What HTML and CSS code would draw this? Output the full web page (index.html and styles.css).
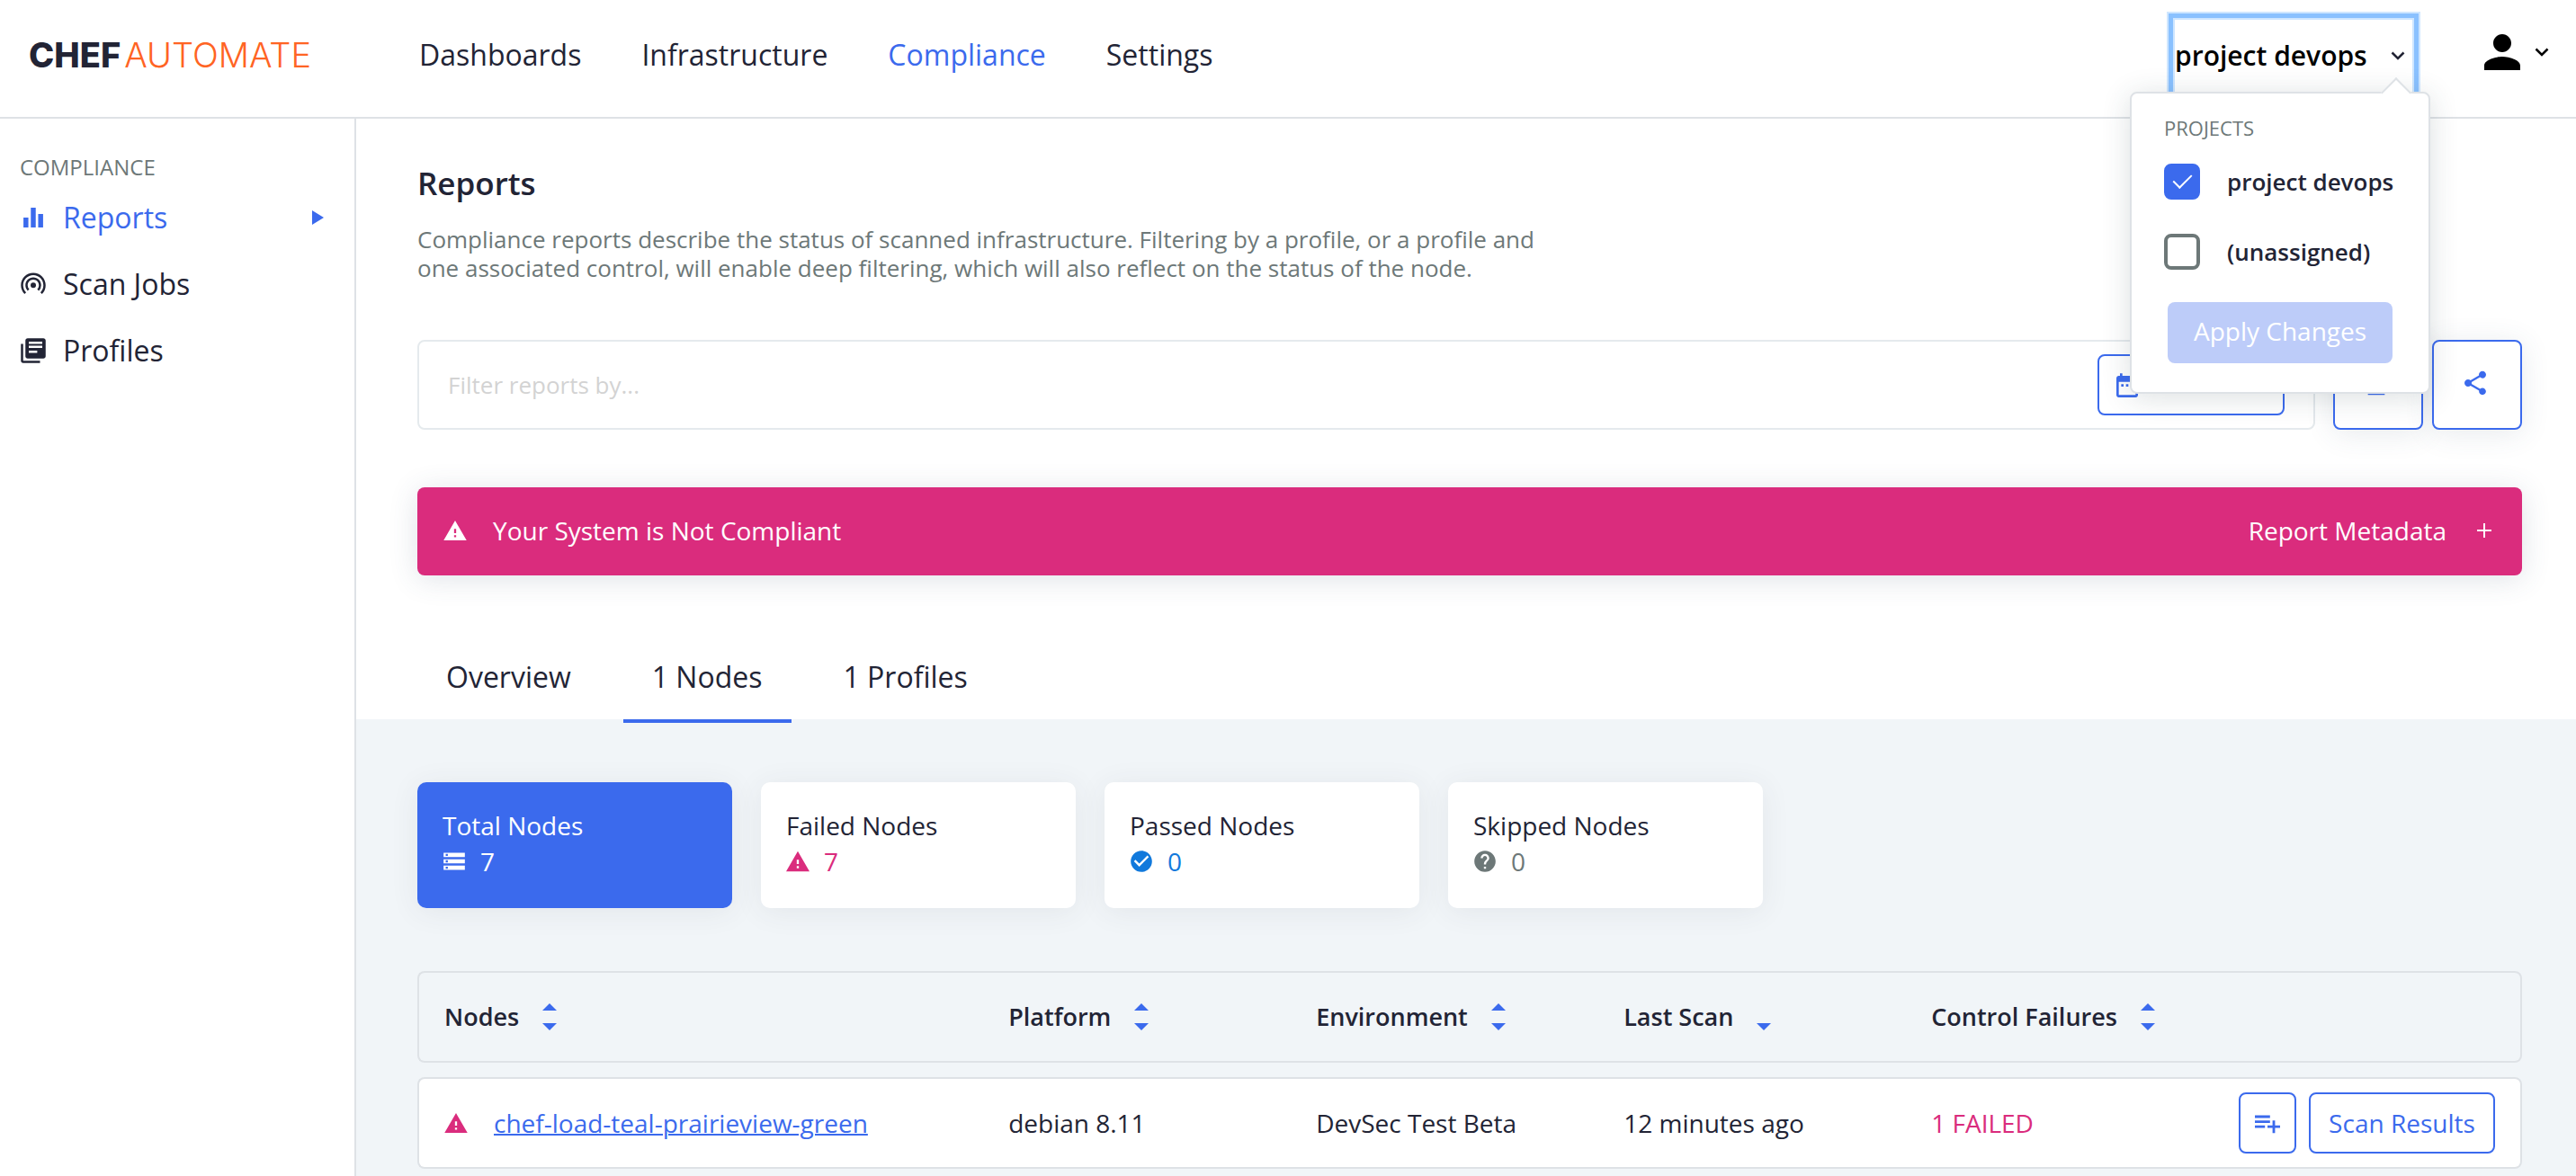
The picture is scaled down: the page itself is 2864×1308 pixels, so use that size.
FILE: index.html
```html
<!DOCTYPE html>
<html lang="en">
<head>
<meta charset="utf-8">
<title>Chef Automate - Compliance Reports</title>
<link rel="stylesheet" href="styles.css">
</head>
<body>
<svg class="sprite" aria-hidden="true">
  <symbol id="warning" viewBox="1 2 22 19"><path d="M1 21h22L12 2 1 21zm12-3h-2v-2h2v2zm0-4h-2v-4h2v4z"/></symbol>
  <symbol id="chevron" viewBox="0 0 16 10"><path d="M1.500 1.500L8 8l6.500-6.500" fill="none" stroke="currentColor" stroke-width="2.500"/></symbol>
  <symbol id="sort" viewBox="0 0 16 30"><path d="M8 0l8 8H0zM0 22h16l-8 8z"/></symbol>
  <symbol id="sort-down" viewBox="0 0 16 30"><path d="M0 22h16l-8 8z"/></symbol>
</svg>

<header class="topbar">
  <a class="logo" href="#"><span class="logo-chef">CHEF</span><span class="logo-automate">AUTOMATE</span></a>
  <nav class="topnav">
    <a href="#">Dashboards</a>
    <a href="#">Infrastructure</a>
    <a href="#" class="active">Compliance</a>
    <a href="#">Settings</a>
  </nav>
  <div class="projects">
    <button class="projects-toggle" type="button" aria-expanded="true">project devops <svg class="chevron"><use href="#chevron"/></svg></button>
    <form class="projects-menu">
      <h2 class="menu-title">PROJECTS</h2>
      <label class="check"><input type="checkbox" checked><span>project devops</span></label>
      <label class="check"><input type="checkbox"><span>(unassigned)</span></label>
      <button class="apply" type="button" disabled>Apply Changes</button>
    </form>
  </div>
  <button class="user" type="button" aria-label="User menu">
    <svg class="person" viewBox="4 4 16 16"><path d="M12 12c2.210 0 4-1.790 4-4s-1.790-4-4-4-4 1.790-4 4 1.790 4 4 4zm0 2c-2.670 0-8 1.340-8 4v2h16v-2c0-2.660-5.330-4-8-4z"/></svg>
    <svg class="chevron"><use href="#chevron"/></svg>
  </button>
</header>

<div class="shell">
  <aside class="sidebar">
    <h2 class="side-title">COMPLIANCE</h2>
    <nav class="sidenav">
      <a href="#" class="active">
        <svg viewBox="1 1 22 22"><path d="M10 20h4V4h-4v16zm-6 0h4v-8H4v8zM16 9v11h4V9h-4z"/></svg>
        <span>Reports</span>
        <svg class="caret" viewBox="0 0 13 16"><path d="M0 0l13 8-13 8z"/></svg>
      </a>
      <a href="#">
        <svg viewBox="0 0 24 24"><path d="M12 5.990c-3.860 0-7 3.140-7 7 0 1.920.78 3.650 2.030 4.920l1.420-1.420A4.980 4.980 0 0 1 7 12.990c0-2.760 2.240-5 5-5s5 2.240 5 5c0 1.370-.56 2.620-1.460 3.520l1.420 1.420A6.980 6.980 0 0 0 19 12.990c0-3.860-3.140-7-7-7z"/><circle cx="12" cy="13" r="2.400"/><path d="M12 1.990C5.930 1.990 1 6.920 1 12.990c0 3.040 1.230 5.790 3.220 7.780l1.420-1.420A8.960 8.960 0 0 1 3 12.990c0-4.970 4.030-9 9-9s9 4.030 9 9c0 2.490-1.010 4.740-2.640 6.360l1.420 1.420A10.960 10.960 0 0 0 23 12.990c0-6.070-4.930-11-11-11z"/></svg>
        <span>Scan Jobs</span>
      </a>
      <a href="#">
        <svg viewBox="0 0 24 24"><path d="M3 6H1v15c0 1.100.9 2 2 2h15v-2H3V6zM21 1H7c-1.100 0-2 .9-2 2v14c0 1.100.9 2 2 2h14c1.100 0 2-.9 2-2V3c0-1.100-.9-2-2-2zm-1 8.500H8v-2h12v2zm-4.500 4.500H8v-2h7.500v2zM20 6H8V4h12v2z"/></svg>
        <span>Profiles</span>
      </a>
    </nav>
  </aside>

  <main class="main">
    <section class="intro">
      <h1>Reports</h1>
      <p>Compliance reports describe the status of scanned infrastructure. Filtering by a profile, or a profile and one associated control, will enable deep filtering, which will also reflect on the status of the node.</p>
    </section>

    <div class="filters">
      <div class="filter-box">
        <input type="text" placeholder="Filter reports by..." aria-label="Filter reports by">
        <button class="outline date" type="button" aria-label="Choose date">
          <svg viewBox="3 1 18 21"><path d="M9 11H7v2h2v-2zm4 0h-2v2h2v-2zm4 0h-2v2h2v-2zm2-7h-1V2h-2v2H8V2H6v2H5c-1.110 0-2 .9-2 2v14c0 1.100.89 2 2 2h14c1.100 0 2-.9 2-2V6c0-1.100-.9-2-2-2zm0 16H5V9h14v11z"/></svg>
        </button>
      </div>
      <div class="filter-actions">
        <button class="outline square" type="button" aria-label="Download"><svg viewBox="0 0 24 24"><path d="M19 10h-4V4H9v6H5l7 7 7-7zM5 19v3h14v-3H5z"/></svg></button>
        <button class="outline square" type="button" aria-label="Share"><svg viewBox="0 0 24 24"><path d="M18 16.080c-.76 0-1.440.3-1.960.77L8.910 12.700c.05-.23.090-.46.090-.7s-.04-.47-.09-.7l7.050-4.110c.54.5 1.250.81 2.040.81 1.660 0 3-1.340 3-3s-1.340-3-3-3-3 1.340-3 3c0 .24.040.47.090.7L8.040 9.810C7.500 9.310 6.790 9 6 9c-1.660 0-3 1.340-3 3s1.340 3 3 3c.79 0 1.500-.31 2.040-.81l7.120 4.160c-.05.210-.08.430-.08.650 0 1.610 1.310 2.920 2.920 2.920 1.610 0 2.920-1.310 2.920-2.920s-1.310-2.920-2.920-2.920z"/></svg></button>
      </div>
    </div>

    <div class="banner">
      <svg class="warn"><use href="#warning"/></svg>
      <span class="banner-text">Your System is Not Compliant</span>
      <button class="metadata" type="button">Report Metadata <svg viewBox="0 0 16 16"><path d="M7 0h2v7h7v2H9v7H7V9H0V7h7z"/></svg></button>
    </div>

    <nav class="tabs">
      <a href="#">Overview</a>
      <a href="#" class="active">1 Nodes</a>
      <a href="#">1 Profiles</a>
    </nav>

    <section class="results">
      <div class="cards">
        <button class="card selected" type="button">
          <span>Total Nodes</span>
          <span class="count"><svg viewBox="1 1 22 22"><path d="M2 20h20v-4H2v4zm2-3h2v2H4v-2zM2 4v4h20V4H2zm4 3H4V5h2v2zm-4 7h20v-4H2v4zm2-3h2v2H4v-2z"/></svg>7</span>
        </button>
        <button class="card" type="button">
          <span>Failed Nodes</span>
          <span class="count failed"><svg><use href="#warning"/></svg>7</span>
        </button>
        <button class="card" type="button">
          <span>Passed Nodes</span>
          <span class="count passed"><svg viewBox="1 1 22 22"><path d="M12 2C6.480 2 2 6.480 2 12s4.480 10 10 10 10-4.480 10-10S17.520 2 12 2zm-2 15l-5-5 1.410-1.410L10 14.170l7.590-7.590L19 8l-9 9z"/></svg>0</span>
        </button>
        <button class="card" type="button">
          <span>Skipped Nodes</span>
          <span class="count skipped"><svg viewBox="1 1 22 22"><path d="M12 2C6.480 2 2 6.480 2 12s4.480 10 10 10 10-4.480 10-10S17.520 2 12 2zm1 17h-2v-2h2v2zm2.070-7.750l-.9.920C13.450 12.900 13 13.500 13 15h-2v-.5c0-1.100.45-2.100 1.170-2.830l1.240-1.260c.37-.36.59-.86.59-1.410 0-1.100-.9-2-2-2s-2 .9-2 2H8c0-2.210 1.790-4 4-4s4 1.790 4 4c0 .88-.36 1.680-.93 2.250z"/></svg>0</span>
        </button>
      </div>

      <table class="nodes">
        <colgroup><col class="c-node"><col class="c-mid"><col class="c-mid"><col class="c-mid"><col class="c-mid"><col></colgroup>
        <thead>
          <tr>
            <th><button type="button">Nodes <svg><use href="#sort"/></svg></button></th>
            <th><button type="button">Platform <svg><use href="#sort"/></svg></button></th>
            <th><button type="button">Environment <svg><use href="#sort"/></svg></button></th>
            <th><button type="button">Last Scan <svg><use href="#sort-down"/></svg></button></th>
            <th><button type="button">Control Failures <svg><use href="#sort"/></svg></button></th>
            <td></td>
          </tr>
        </thead>
        <tbody>
          <tr>
            <td><div class="node"><svg class="warn"><use href="#warning"/></svg><a href="#">chef-load-teal-prairieview-green</a></div></td>
            <td>debian 8.11</td>
            <td>DevSec Test Beta</td>
            <td>12 minutes ago</td>
            <td class="failed">1 FAILED</td>
            <td><div class="actions">
              <button class="outline history" type="button" aria-label="Scan history"><svg viewBox="2 5 20 14"><path d="M14 10H2v2h12v-2zm0-4H2v2h12V6zm4 8v-4h-2v4h-4v2h4v4h2v-4h4v-2h-4zM2 16h8v-2H2v2z"/></svg></button>
              <button class="outline scan" type="button">Scan Results</button>
            </div></td>
          </tr>
        </tbody>
      </table>
    </section>
  </main>
</div>
</body>
</html>
```
FILE: styles.css
```css
:root {
  --blue: #3b6aed;
  --pink: #da2c7d;
  --ink: #222435;
  --gray: #6d7878;
  --line: #dee2e6;
  --wash: #f1f5f8;
}

* { box-sizing: border-box; }

body {
  margin: 0;
  min-height: 100vh;
  display: flex;
  flex-direction: column;
  font: 28px/40px "Open Sans", "Noto Sans", sans-serif;
  color: var(--ink);
  background: #fff;
}

h1, h2, p { margin: 0; font-weight: 400; }
a { color: inherit; text-decoration: none; }
button { font: inherit; color: inherit; background: none; border: 0; padding: 0; cursor: pointer; }
svg { display: block; flex: none; fill: currentColor; }
.sprite { position: absolute; width: 0; height: 0; }
.chevron { width: 16px; height: 10px; }

/* Top bar */
.topbar {
  display: flex;
  align-items: flex-start;
  height: 132px;
  padding: 0 30px 0 32px;
  border-bottom: 2px solid var(--line);
}
.logo {
  display: flex;
  gap: 4px;
  width: 434px;
  padding-top: 41px;
  font: 38px/40px Inter, sans-serif;
}
.logo-chef { font-weight: 800; }
.logo-automate { font-weight: 300; color: #ff6424; }
.topnav { display: flex; gap: 67px; padding-top: 41px; font-size: 32px; }
.active { color: var(--blue); }

.projects { position: relative; margin: 22px 80px 0 auto; }
.projects-toggle {
  display: flex;
  align-items: center;
  justify-content: space-between;
  width: 264px;
  height: 80px;
  padding-right: 8px;
  font-size: 30px;
  font-weight: 600;
  white-space: nowrap;
  color: #000;
  box-shadow: 0 0 0 2px #cfe6ff, 0 0 0 7px #8ac1ff, 0 0 0 9px #cfe6ff;
}
.projects-toggle .chevron { color: var(--ink); }
.projects-menu {
  position: absolute;
  z-index: 2;
  top: 80px;
  right: -20px;
  width: 334px;
  height: 336px;
  padding: 20px 36px;
  background: #fff;
  border: 2px solid var(--line);
  border-radius: 8px;
  box-shadow: 0 4px 32px rgba(40, 60, 70, .16);
}
.projects-menu::before {
  content: "";
  position: absolute;
  top: -13px;
  right: 24px;
  width: 22px;
  height: 22px;
  background: #fff;
  border: solid var(--line);
  border-width: 2px 0 0 2px;
  transform: rotate(45deg);
}
.menu-title { font-size: 22px; line-height: 36px; color: var(--gray); }
.check {
  display: flex;
  align-items: center;
  gap: 30px;
  height: 78px;
  font-size: 26px;
  font-weight: 600;
  white-space: nowrap;
}
.check:first-of-type { margin-top: 3px; }
.check input {
  appearance: none;
  flex: none;
  width: 40px;
  height: 40px;
  margin: 0;
  border: 4px solid var(--gray);
  border-radius: 8px;
  display: grid;
  place-items: center;
}
.check input:checked { border-color: var(--blue); background: var(--blue); }
.check input:checked::before {
  content: "";
  width: 9px;
  height: 18px;
  margin-bottom: 6px;
  border: solid #fff;
  border-width: 0 2px 2px 0;
  transform: rotate(45deg);
}
.apply {
  display: block;
  width: 250px;
  height: 68px;
  margin: 17px 4px 0;
  padding-bottom: 4px;
  border-radius: 8px;
  background: #bdccf9;
  color: #fff;
}

.user { display: flex; align-items: center; gap: 16px; padding-top: 38px; color: #000; }
.person { width: 40px; height: 40px; }

/* Side bar */
.shell { display: flex; flex: 1; }
.sidebar {
  flex: none;
  width: 396px;
  padding: 36px 34px 0 22px;
  border-right: 2px solid var(--line);
}
.side-title { font-size: 24px; line-height: 36px; color: var(--gray); }
.sidenav { display: flex; flex-direction: column; margin-top: 1px; font-size: 32px; }
.sidenav a { display: flex; align-items: center; gap: 18px; height: 74px; }
.sidenav svg { width: 30px; height: 30px; }
.sidenav .caret { width: 13px; height: 16px; margin-left: auto; }

/* Main column */
.main { flex: 1; min-width: 0; display: flex; flex-direction: column; }
.intro { padding: 48px 60px 0 68px; }
h1 { font-size: 35px; line-height: 48px; font-weight: 600; }
.intro p { max-width: 1260px; margin-top: 22px; font-size: 26px; line-height: 32px; color: var(--gray); }

.outline { display: grid; place-items: center; border: 2px solid var(--blue); border-radius: 8px; color: var(--blue); background: #fff; }
.filters { display: flex; gap: 20px; padding: 64px 60px 0 68px; }
.filter-box {
  flex: 1;
  display: flex;
  align-items: center;
  height: 100px;
  padding: 0 32px;
  border: 2px solid #e5eaed;
  border-radius: 8px;
}
.filter-box input {
  flex: 1;
  border: 0;
  outline: 0;
  padding: 0;
  font: 26px/40px "Open Sans", "Noto Sans", sans-serif;
}
.filter-box input::placeholder { color: #d3d3d3; }
.date { width: 208px; height: 68px; justify-items: start; padding-left: 19px; }
.date svg { width: 24px; height: 28px; }
.filter-actions { display: flex; gap: 10px; }
.square { width: 100px; height: 100px; padding: 0 4px 4px 0; box-shadow: 0 4px 32px rgba(60, 80, 110, .12); }
.square svg { width: 32px; height: 32px; }

.banner {
  display: flex;
  align-items: center;
  height: 98px;
  margin: 64px 60px 0 68px;
  padding: 0 34px 2px 29px;
  border-radius: 8px;
  background: var(--pink);
  color: #fff;
  box-shadow: 0 4px 32px rgba(60, 80, 110, .16);
}
.warn { width: 26px; height: 22px; }
.banner-text { margin-left: 29px; }
.metadata { display: flex; align-items: center; gap: 34px; margin-left: auto; }
.metadata svg { width: 16px; height: 16px; }

.tabs { position: relative; display: flex; gap: 26px; margin-top: 80px; padding-left: 68px; font-size: 32px; }
.tabs a { height: 84px; padding: 13px 32px 0; margin-bottom: -4px; color: var(--ink); }
.tabs .active { border-bottom: 4px solid var(--blue); }

.results { flex: 1; padding: 70px 60px 0 68px; background: var(--wash); }
.cards { display: flex; gap: 32px; }
.card {
  width: 350px;
  height: 140px;
  padding: 0 28px 4px;
  display: flex;
  flex-direction: column;
  justify-content: center;
  text-align: left;
  border-radius: 10px;
  background: #fff;
  box-shadow: 0 4px 32px rgba(60, 70, 80, .08);
}
.card.selected { background: var(--blue); color: #fff; }
.count { display: flex; align-items: center; gap: 16px; }
.count svg { width: 26px; height: 26px; }
.failed { color: var(--pink); }
.passed { color: #1179dc; }
.skipped { color: var(--gray); }

/* Nodes table */
.nodes { width: 100%; margin-top: 54px; table-layout: fixed; border-collapse: separate; border-spacing: 0 16px; }
.c-node { width: 28%; }
.c-mid { width: 342px; }
.nodes th, .nodes td { height: 102px; padding: 0 0 0 2px; text-align: left; border: solid var(--line); border-width: 2px 0; white-space: nowrap; }
.nodes tbody td { background: #fff; }
.nodes tr > :first-child { padding-left: 28px; border-left-width: 2px; border-radius: 8px 0 0 8px; }
.nodes tr > :last-child { padding-right: 28px; border-right-width: 2px; border-radius: 0 8px 8px 0; }
.nodes th button { display: flex; align-items: center; gap: 26px; font-size: 27px; font-weight: 600; }
.nodes th svg { width: 16px; height: 30px; color: var(--blue); }
.node { display: flex; align-items: center; gap: 29px; }
.node .warn { color: var(--pink); }
.node a { color: var(--blue); text-decoration: underline; text-decoration-thickness: 2px; }
.actions { display: flex; justify-content: flex-end; gap: 14px; }
.history { width: 64px; height: 68px; }
.history svg { width: 28px; height: 20px; overflow: visible; }
.scan { width: 208px; height: 68px; }
```
